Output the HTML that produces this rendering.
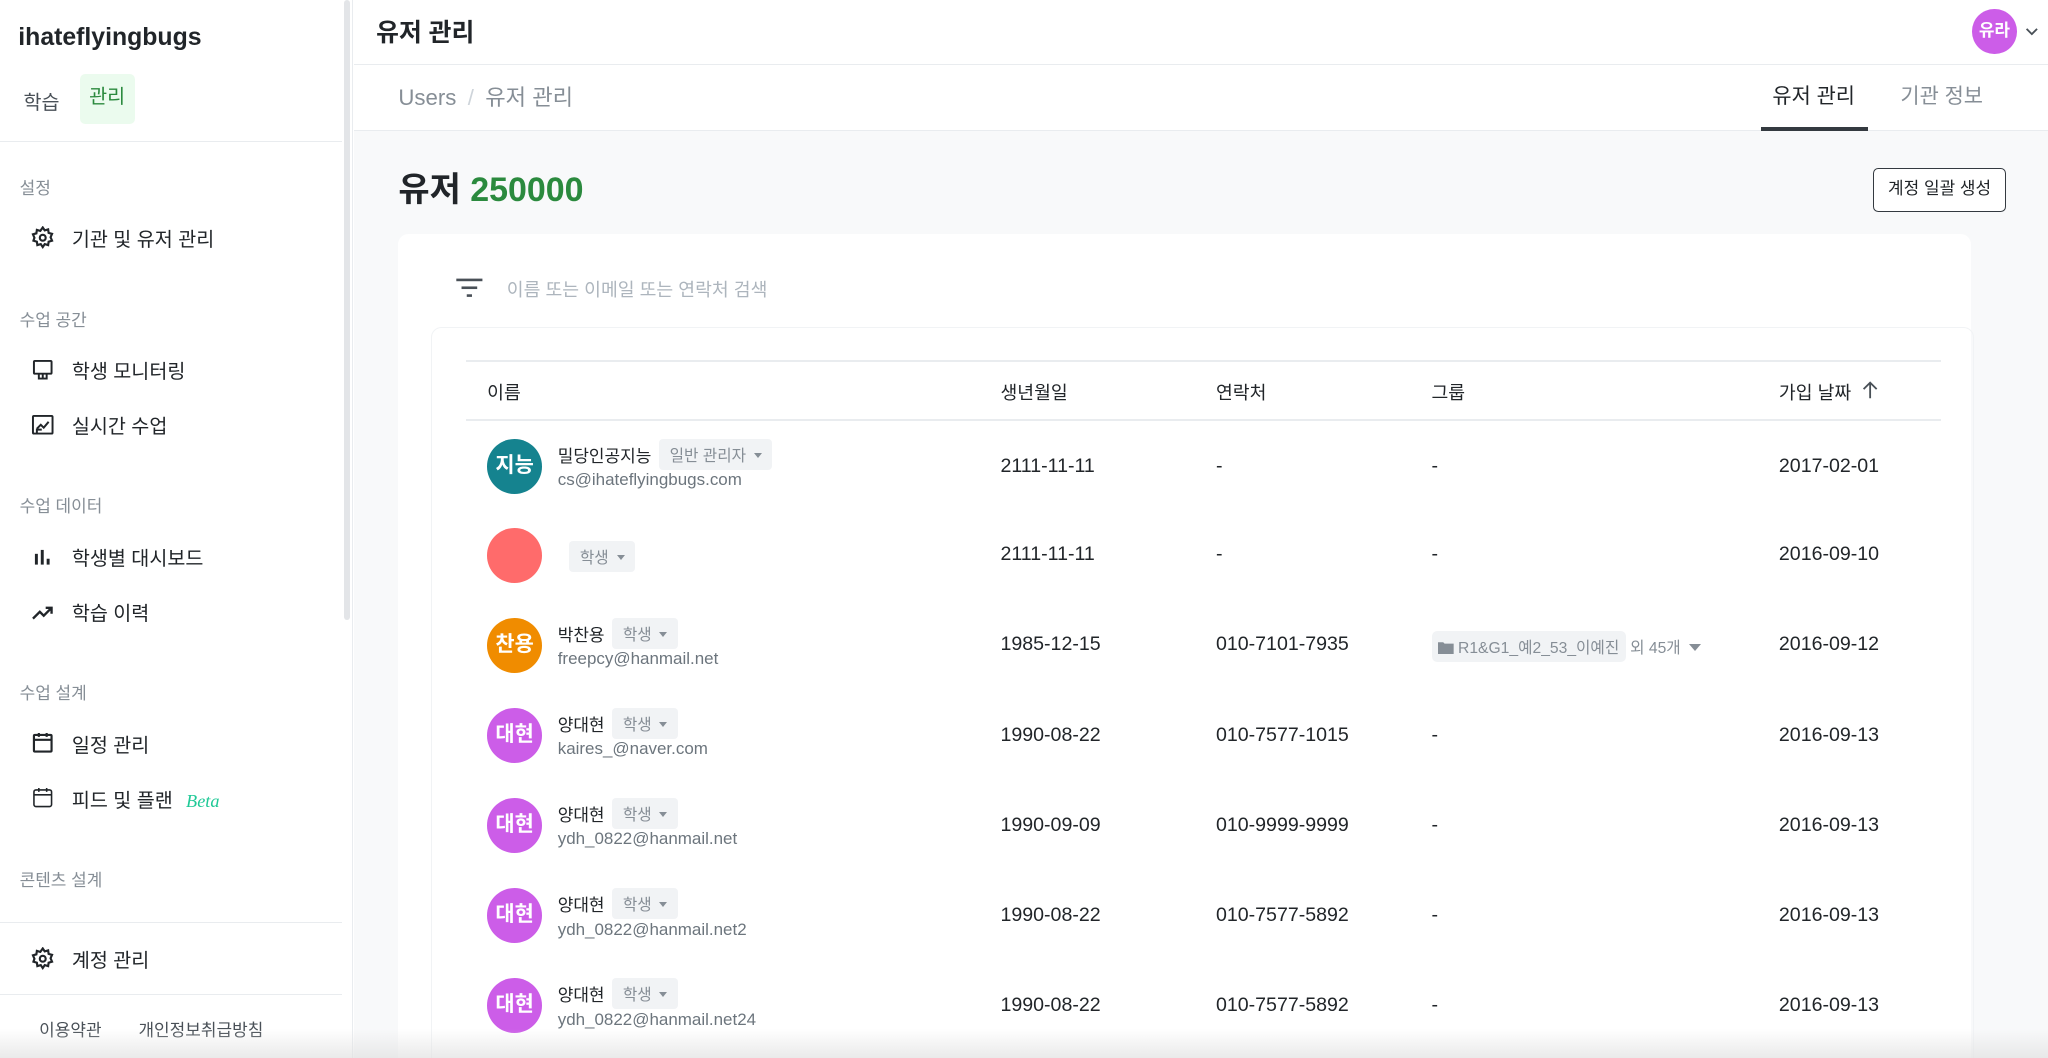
<!DOCTYPE html>
<html><head><meta charset="utf-8"><style>
*{box-sizing:border-box;margin:0;padding:0}
html,body{width:2048px;height:1058px;overflow:hidden;background:#fff}
body{font-family:"Liberation Sans","Noto Sans CJK KR",sans-serif;color:#212529}
#w{zoom:1.30612;width:1568px;height:810px;position:relative;overflow:hidden}
.a{position:absolute;white-space:nowrap}
.side{left:0;top:0;width:270px;height:810px;border-right:1px solid #e9ecef;background:#fff}
.sec{font-size:13px;color:#868e96;left:15px}
.it{font-size:15px;color:#212529;left:55px;margin-top:-2px}
.ic{left:24px}
.hline{height:1px;background:#e9ecef}
.row .av{position:absolute;left:373px;width:42px;height:42px;border-radius:50%;color:#fff;font-weight:bold;font-size:16px;text-align:center;line-height:42px}
.bd{display:inline-block;background:#f1f3f5;color:#868e96;font-size:12px;padding:3px 8px;border-radius:3px;margin-left:6px;vertical-align:1px}
.bd:after{content:"";display:inline-block;border:3.5px solid transparent;border-top:4px solid #868e96;margin-left:6px;vertical-align:-1px}
.cell{font-size:15px;color:#212529}
</style></head><body><div id="w">
<div class="a side"></div>
<div class="a" style="left:263px;top:0;width:5px;height:475px;background:#e3e5e8;border-radius:3px"></div>
<div class="a" style="left:14px;top:18px;font-size:19px;font-weight:bold;color:#212529">ihateflyingbugs</div>
<div class="a" style="left:18px;top:66px;font-size:15px;color:#495057">학습</div>
<div class="a" style="left:61px;top:57px;width:42px;height:38px;background:#ebfbee;border-radius:4px;color:#2b8a3e;font-size:15px;text-align:center;line-height:36px">관리</div>
<div class="a hline" style="left:0;top:108px;width:262px"></div>
<div class="a sec" style="top:133px">설정</div>
<svg class="a ic" style="top:173px" width="18" height="18" viewBox="0 0 24 24" fill="none" stroke="#212529" stroke-width="2.2"><circle cx="12" cy="12" r="3"/><path d="M12 1.5l2 3 3.5-1 .5 3.5 3.5 1-1.5 3.5 1.5 3.5-3.5 1-.5 3.5-3.5-1-2 3-2-3-3.5 1-.5-3.5-3.5-1L3.5 12 2 8.5l3.5-1 .5-3.5 3.5 1z"/></svg>
<div class="a it" style="top:173px">기관 및 유저 관리</div>
<div class="a sec" style="top:234px">수업 공간</div>
<svg class="a ic" style="top:274px" width="18" height="18" viewBox="0 0 24 24" fill="none" stroke="#212529" stroke-width="2"><rect x="3" y="3" width="18" height="13" rx="1"/><path d="M8 16v5h8v-5M12 16v5"/></svg>
<div class="a it" style="top:274px">학생 모니터링</div>
<svg class="a ic" style="top:316px" width="18" height="18" viewBox="0 0 24 24" fill="none" stroke="#212529" stroke-width="2"><rect x="2" y="3" width="20" height="18" rx="1"/><path d="M6 16l4-4 3 3 5-6M6 21v-4h5"/></svg>
<div class="a it" style="top:316px">실시간 수업</div>
<div class="a sec" style="top:377px">수업 데이터</div>
<svg class="a ic" style="top:418px" width="18" height="18" viewBox="0 0 24 24" fill="#212529"><rect x="4" y="8" width="3" height="11"/><rect x="10" y="4" width="3" height="15"/><rect x="16" y="13" width="3" height="6"/></svg>
<div class="a it" style="top:417px">학생별 대시보드</div>
<svg class="a ic" style="top:460px" width="18" height="18" viewBox="0 0 24 24" fill="none" stroke="#212529" stroke-width="2.4"><path d="M2 18l7-7 4 4 8-8M15 7h6v6"/></svg>
<div class="a it" style="top:459px">학습 이력</div>
<div class="a sec" style="top:520px">수업 설계</div>
<svg class="a ic" style="top:560px" width="18" height="18" viewBox="0 0 24 24" fill="none" stroke="#212529" stroke-width="2.2"><rect x="3" y="4" width="18" height="17" rx="1"/><path d="M3 9h18M8 2v4M16 2v4"/></svg>
<div class="a it" style="top:560px">일정 관리</div>
<svg class="a ic" style="top:602px" width="18" height="18" viewBox="0 0 24 24" fill="none" stroke="#212529" stroke-width="1.6"><rect x="3" y="4" width="18" height="17" rx="2"/><path d="M3 9h18M8 2v4M16 2v4"/></svg>
<div class="a it" style="top:602px">피드 및 플랜 <span style="font-family:'Liberation Serif',serif;font-style:italic;color:#20c997;font-size:14px;margin-left:6px">Beta</span></div>
<div class="a sec" style="top:663px">콘텐츠 설계</div>
<div class="a hline" style="left:0;top:706px;width:262px"></div>
<svg class="a ic" style="top:725px" width="18" height="18" viewBox="0 0 24 24" fill="none" stroke="#212529" stroke-width="2.2"><circle cx="12" cy="12" r="3"/><path d="M12 1.5l2 3 3.5-1 .5 3.5 3.5 1-1.5 3.5 1.5 3.5-3.5 1-.5 3.5-3.5-1-2 3-2-3-3.5 1-.5-3.5-3.5-1L3.5 12 2 8.5l3.5-1 .5-3.5 3.5 1z"/></svg>
<div class="a it" style="top:725px">계정 관리</div>
<div class="a hline" style="left:0;top:761px;width:262px"></div>
<div class="a" style="left:30px;top:778px;font-size:13px;color:#495057">이용약관</div>
<div class="a" style="left:106px;top:778px;font-size:13px;color:#495057">개인정보취급방침</div>

<div class="a" style="left:271px;top:0;width:1297px;height:50px;background:#fff;border-bottom:1px solid #e9ecef"></div>
<div class="a" style="left:288px;top:10px;font-size:19px;font-weight:bold">유저 관리</div>
<div class="a" style="left:1510px;top:7px;width:34px;height:34px;border-radius:50%;background:#cc5de8;color:#fff;font-size:13px;font-weight:bold;text-align:center;line-height:34px">유라</div>
<svg class="a" style="left:1550px;top:19px" width="12" height="10" viewBox="0 0 12 10" fill="none" stroke="#495057" stroke-width="1.4"><path d="M2 3l4 4 4-4"/></svg>
<div class="a" style="left:271px;top:50px;width:1297px;height:50px;background:#fff;border-bottom:1px solid #e9ecef"></div>
<div class="a" style="left:305px;top:61px;font-size:17px;color:#868e96">Users <span style="color:#ced4da;margin:0 4px">/</span> 유저 관리</div>
<div class="a" style="left:1357px;top:61px;font-size:16px;color:#212529">유저 관리</div>
<div class="a" style="left:1348px;top:97px;width:82px;height:3px;background:#343a40"></div>
<div class="a" style="left:1455px;top:61px;font-size:16px;color:#868e96">기관 정보</div>
<div class="a" style="left:271px;top:100px;width:1297px;height:710px;background:#f8f9fa"></div>
<div class="a" style="left:305px;top:124px;font-size:26px;font-weight:bold">유저 <span style="color:#2b8a3e">250000</span></div>
<div class="a" style="left:1434px;top:129px;width:102px;height:33px;border:1px solid #343a40;border-radius:4px;background:#fff;font-size:13px;text-align:center;line-height:31px">계정 일괄 생성</div>
<div class="a" style="left:305px;top:179px;width:1204px;height:640px;background:#fff;border-radius:8px"></div>
<svg class="a" style="left:348px;top:211px" width="22" height="18" viewBox="0 0 22 18" fill="#495057"><rect x="1" y="2" width="20" height="2"/><rect x="5" y="8" width="12" height="2"/><rect x="9" y="14" width="4" height="2"/></svg>
<div class="a" style="left:388px;top:211px;font-size:14px;color:#adb5bd">이름 또는 이메일 또는 연락처 검색</div>
<div class="a" style="left:330px;top:250px;width:1181px;height:600px;border:1px solid #f1f3f5;border-radius:8px"></div>
<div class="a hline" style="left:357px;top:276px;width:1129px"></div>
<div class="a hline" style="left:357px;top:321px;width:1129px"></div>
<div class="a cell" style="left:373px;top:290px;font-size:14px">이름</div>
<div class="a cell" style="left:766px;top:290px;font-size:14px">생년월일</div>
<div class="a cell" style="left:931px;top:290px;font-size:14px">연락처</div>
<div class="a cell" style="left:1096px;top:290px;font-size:14px">그룹</div>
<div class="a cell" style="left:1362px;top:290px;font-size:14px">가입 날짜</div>
<svg class="a" style="left:1425px;top:291px" width="14" height="16" viewBox="0 0 14 16" fill="none" stroke="#495057" stroke-width="1.4"><path d="M7 14V2M2 7l5-5 5 5"/></svg>

<div class="row">
<div class="av" style="top:336px;background:#15838f">지능</div>
<div class="a" style="left:427px;top:336px;font-size:13px">밀당인공지능<span class="bd">일반 관리자</span></div>
<div class="a" style="left:427px;top:360px;font-size:13px;color:#6c757d">cs@ihateflyingbugs.com</div>
<div class="a cell" style="left:766px;top:348px">2111-11-11</div><div class="a cell" style="left:931px;top:348px">-</div><div class="a cell" style="left:1096px;top:348px">-</div><div class="a cell" style="left:1362px;top:348px">2017-02-01</div>

<div class="av" style="top:404px;background:#ff6b6b"></div>
<div class="a" style="left:430px;top:414px;font-size:13px"><span class="bd">학생</span></div>
<div class="a cell" style="left:766px;top:416px">2111-11-11</div><div class="a cell" style="left:931px;top:416px">-</div><div class="a cell" style="left:1096px;top:416px">-</div><div class="a cell" style="left:1362px;top:416px">2016-09-10</div>

<div class="av" style="top:473px;background:#f08c00">찬용</div>
<div class="a" style="left:427px;top:473px;font-size:13px">박찬용<span class="bd">학생</span></div>
<div class="a" style="left:427px;top:497px;font-size:13px;color:#6c757d">freepcy@hanmail.net</div>
<div class="a cell" style="left:766px;top:485px">1985-12-15</div><div class="a cell" style="left:931px;top:485px">010-7101-7935</div>
<div class="a" style="left:1096px;top:483px;font-size:12px;color:#868e96"><span style="display:inline-block;background:#f1f3f5;border-radius:4px;padding:3px 5px"><svg width="12" height="10" viewBox="0 0 12 10" fill="#868e96" style="vertical-align:-1px"><path d="M0 1h4l1 1h7v8H0z"/></svg> R1&amp;G1_예2_53_이예진</span> 외 45개 <span style="display:inline-block;border:5px solid transparent;border-top:6px solid #868e96;vertical-align:-3px;margin-left:3px"></span></div>
<div class="a cell" style="left:1362px;top:485px">2016-09-12</div>

<div class="av" style="top:542px;background:#cc5de8">대현</div>
<div class="a" style="left:427px;top:542px;font-size:13px">양대현<span class="bd">학생</span></div>
<div class="a" style="left:427px;top:566px;font-size:13px;color:#6c757d">kaires_@naver.com</div>
<div class="a cell" style="left:766px;top:554px">1990-08-22</div><div class="a cell" style="left:931px;top:554px">010-7577-1015</div><div class="a cell" style="left:1096px;top:554px">-</div><div class="a cell" style="left:1362px;top:554px">2016-09-13</div>

<div class="av" style="top:611px;background:#cc5de8">대현</div>
<div class="a" style="left:427px;top:611px;font-size:13px">양대현<span class="bd">학생</span></div>
<div class="a" style="left:427px;top:635px;font-size:13px;color:#6c757d">ydh_0822@hanmail.net</div>
<div class="a cell" style="left:766px;top:623px">1990-09-09</div><div class="a cell" style="left:931px;top:623px">010-9999-9999</div><div class="a cell" style="left:1096px;top:623px">-</div><div class="a cell" style="left:1362px;top:623px">2016-09-13</div>

<div class="av" style="top:680px;background:#cc5de8">대현</div>
<div class="a" style="left:427px;top:680px;font-size:13px">양대현<span class="bd">학생</span></div>
<div class="a" style="left:427px;top:704px;font-size:13px;color:#6c757d">ydh_0822@hanmail.net2</div>
<div class="a cell" style="left:766px;top:692px">1990-08-22</div><div class="a cell" style="left:931px;top:692px">010-7577-5892</div><div class="a cell" style="left:1096px;top:692px">-</div><div class="a cell" style="left:1362px;top:692px">2016-09-13</div>

<div class="av" style="top:749px;background:#cc5de8">대현</div>
<div class="a" style="left:427px;top:749px;font-size:13px">양대현<span class="bd">학생</span></div>
<div class="a" style="left:427px;top:773px;font-size:13px;color:#6c757d">ydh_0822@hanmail.net24</div>
<div class="a cell" style="left:766px;top:761px">1990-08-22</div><div class="a cell" style="left:931px;top:761px">010-7577-5892</div><div class="a cell" style="left:1096px;top:761px">-</div><div class="a cell" style="left:1362px;top:761px">2016-09-13</div>
</div>
<div class="a" style="left:0;top:788px;width:1568px;height:22px;background:linear-gradient(rgba(230,230,230,0),rgba(225,225,225,.7))"></div>
</div></body></html>
